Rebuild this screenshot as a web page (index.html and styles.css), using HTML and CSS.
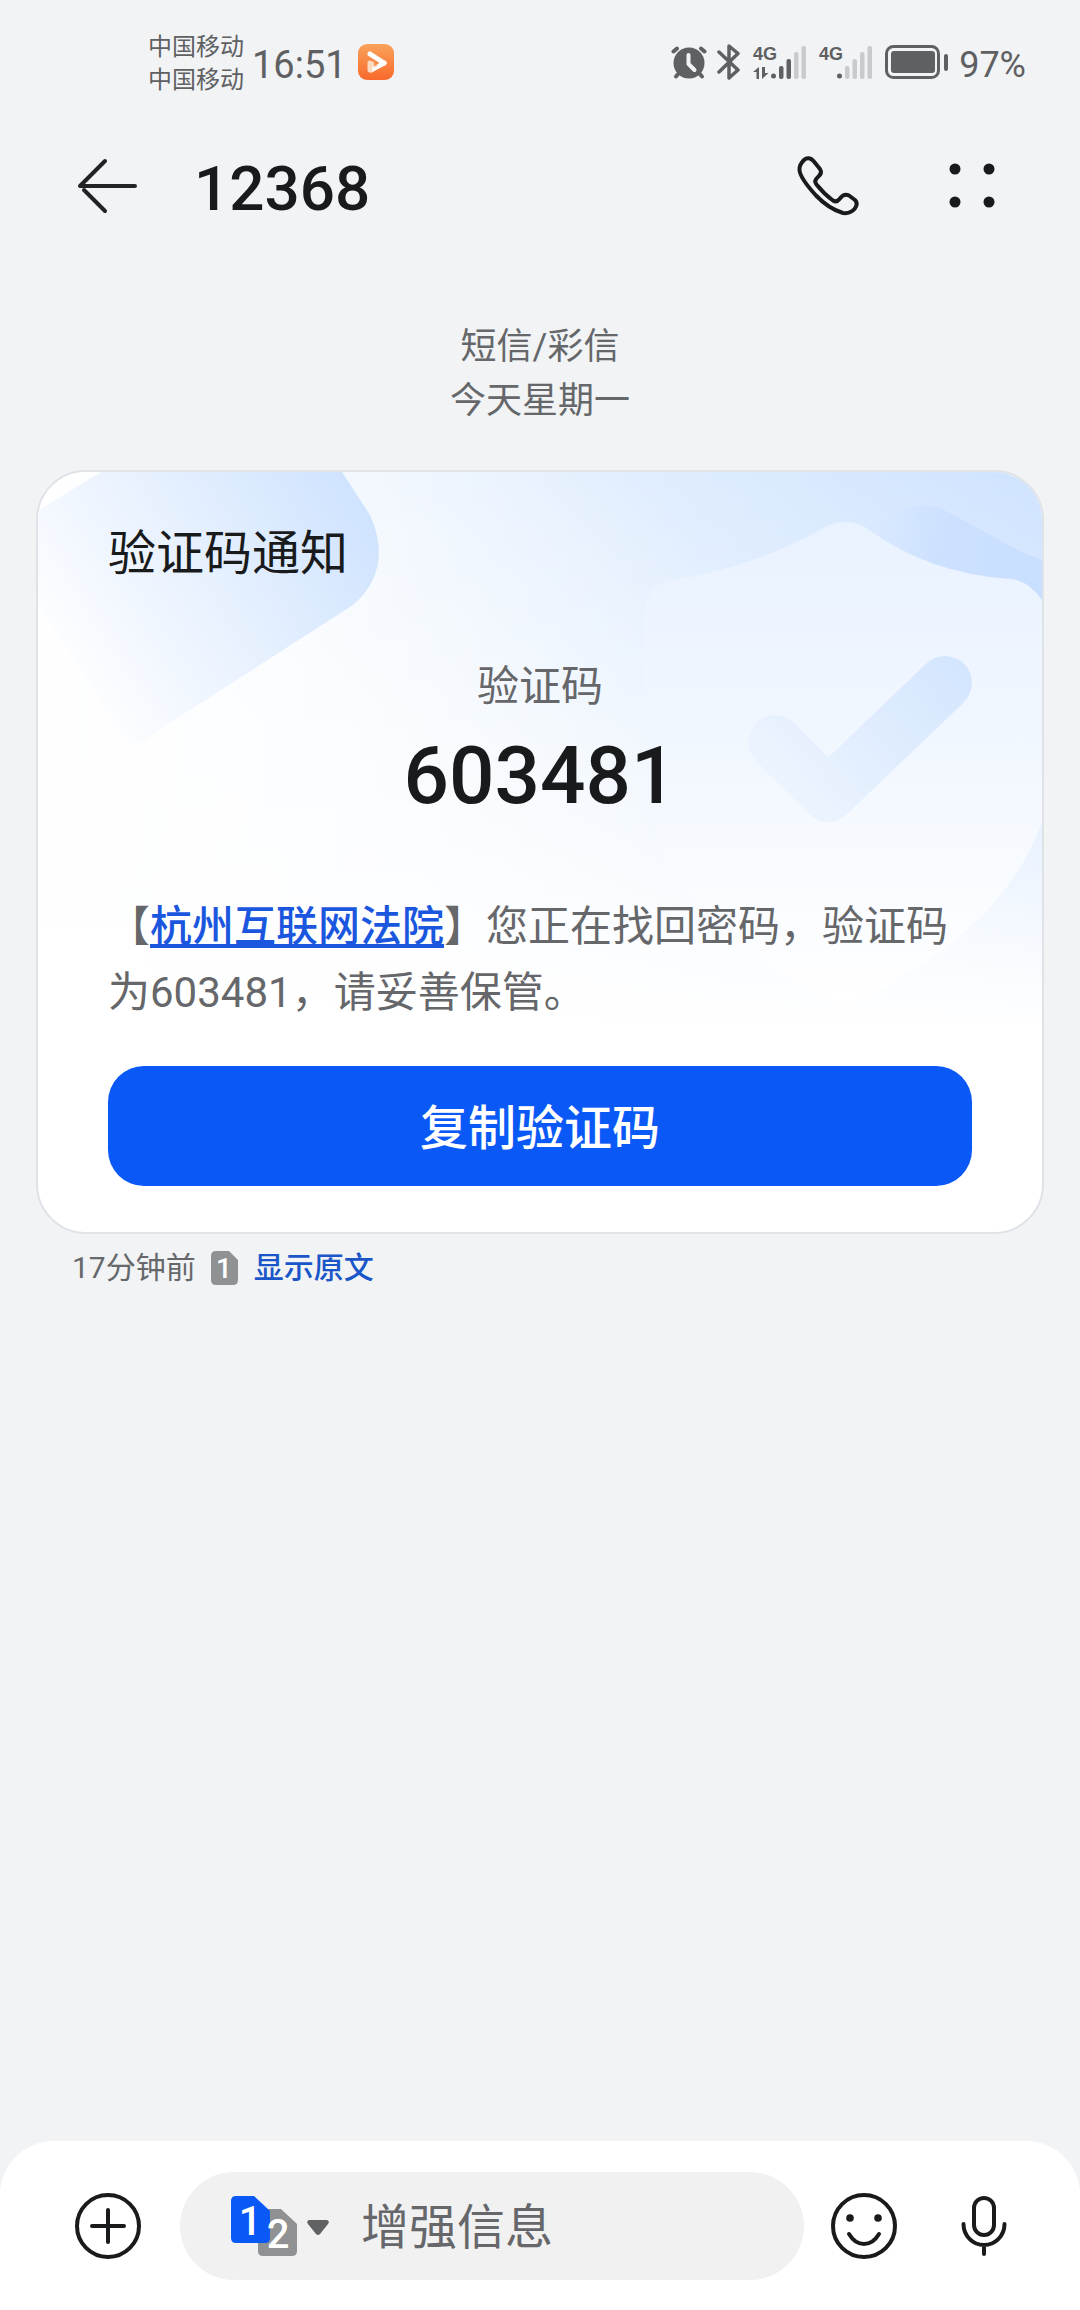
FILE: index.html
```html
<!DOCTYPE html>
<html lang="zh-CN">
<head>
<meta charset="utf-8">
<meta name="viewport" content="width=device-width, initial-scale=1">
<title>12368</title>
<link rel="stylesheet" href="styles.css">
</head>
<body>
<div class="screen">
  <div class="status">
    <div class="status-left">
      <div class="carriers"><span>中国移动</span><span>中国移动</span></div>
      <span class="clock">16:51</span>
      <svg class="app-badge" width="36" height="36" viewBox="0 0 36 36" aria-hidden="true">
        <defs><linearGradient id="badge" x1="0" y1="0" x2="0" y2="1"><stop offset="0" stop-color="#f9a35a"/><stop offset="1" stop-color="#f9692c"/></linearGradient></defs>
        <rect width="36" height="36" rx="9" fill="url(#badge)"/>
        <path d="M12 10l14 9" stroke="#fff" stroke-width="5" stroke-linecap="round" fill="none"/>
        <path d="M26 19l-13 7" stroke="#fff" stroke-width="5" stroke-linecap="round" fill="none"/>
        <path d="M12 26v-7l5 2" stroke="#fdd9bf" stroke-width="5" stroke-linecap="round" stroke-linejoin="round" fill="none"/>
        <path d="M16 17v5l5-2.500z" fill="#f98d4b"/>
      </svg>
    </div>
    <div class="status-right">
      <svg width="36" height="36" viewBox="0 0 36 36" aria-hidden="true">
        <g fill="none" stroke="#5f6062" stroke-linecap="round"><path d="M2.500 7.500l3.500-3M33.500 7.500l-3.500-3" stroke-width="4"/><path d="M8 29l-3 3.500M28 29l3 3.500" stroke-width="4"/></g>
        <circle cx="18" cy="19" r="15.500" fill="#5f6062"/>
        <path d="M17.500 11v9l6 6" fill="none" stroke="#f1f3f5" stroke-width="4" stroke-linecap="round" stroke-linejoin="round"/>
      </svg>
      <svg class="bluetooth" width="24" height="38" viewBox="0 0 24 38" aria-hidden="true">
        <path d="M2 9l19 18-9 8V3l9 7.500L2 29" fill="none" stroke="#5f6062" stroke-width="3.500" stroke-linecap="round" stroke-linejoin="round"/>
      </svg>
      <svg class="signal" width="54" height="36" viewBox="0 0 54 36" aria-hidden="true">
        <text class="net" x="0" y="16">4G</text>
        <g fill="#5f6062"><path d="M0 28l6-5v12H3.500v-7zM9 23h3v6h3.500L9 35z"/><circle cx="20.500" cy="32" r="2.500"/><rect x="26" y="22" width="4.500" height="13" rx="2"/><rect x="33.500" y="15" width="4.500" height="20" rx="2"/></g>
        <g fill="#c9cacc"><rect x="41" y="8" width="4.500" height="27" rx="2"/><rect x="48.500" y="2" width="4.500" height="33" rx="2"/></g>
      </svg>
      <svg class="signal" width="54" height="36" viewBox="0 0 54 36" aria-hidden="true">
        <text class="net" x="0" y="16">4G</text>
        <circle cx="20.500" cy="32" r="2.500" fill="#5f6062"/>
        <g fill="#c9cacc"><rect x="26" y="22" width="4.500" height="13" rx="2"/><rect x="33.500" y="15" width="4.500" height="20" rx="2"/><rect x="41" y="8" width="4.500" height="27" rx="2"/><rect x="48.500" y="2" width="4.500" height="33" rx="2"/></g>
      </svg>
      <svg width="64" height="34" viewBox="0 0 64 34" aria-hidden="true">
        <rect x="1.500" y="1.500" width="52" height="31" rx="7" fill="none" stroke="#5f6062" stroke-width="3"/>
        <rect x="6" y="6" width="44" height="22" rx="3" fill="#5f6062"/>
        <rect x="59" y="9" width="4" height="17" rx="2" fill="#5f6062"/>
      </svg>
      <span class="percent">97%</span>
    </div>
  </div>

  <header class="topbar">
    <button class="icon-btn" type="button" aria-label="返回">
      <svg width="72" height="72" viewBox="0 0 72 72"><g fill="none" stroke="#222325" stroke-width="4" stroke-linecap="round" stroke-linejoin="round"><path d="M63 36H8L33 11M12 40l21 21"/></g></svg>
    </button>
    <h1 class="sender">12368</h1>
    <button class="icon-btn" type="button" aria-label="拨打电话">
      <svg width="72" height="72" viewBox="0 0 72 72"><path d="M12 10C15 7 19 8 21.500 11L28 19C30 22 28.500 25 25.500 27.500C22.500 30 23 32.500 24.500 34.500Q32 44 41 50.500C43.500 52 46 51 47.500 49C50 45.500 53 43.500 57 45.500L63 50C65 52 65.500 55 62.500 59C59 63 55 63.500 51 63Q37 59 24 45.500Q8 28 7.500 20Q7 15 12 10Z" fill="none" stroke="#191a1c" stroke-width="4" stroke-linejoin="round"/></svg>
    </button>
    <button class="icon-btn" type="button" aria-label="更多">
      <svg width="72" height="72" viewBox="0 0 72 72" fill="#191a1c"><circle cx="19" cy="19" r="5.500"/><circle cx="53" cy="19" r="5.500"/><circle cx="19" cy="52" r="5.500"/><circle cx="53" cy="52" r="5.500"/></svg>
    </button>
  </header>

  <main class="thread">
    <div class="day"><span>短信/彩信</span><span>今天星期一</span></div>

    <article class="card">
      <svg class="card-art" viewBox="0 0 1008 560" preserveAspectRatio="xMaxYMin slice" aria-hidden="true">
        <defs>
          <linearGradient id="sky" x1="0" y1="0" x2="1" y2="0"><stop offset="0" stop-color="#fff"/><stop offset=".35" stop-color="#eef5fe"/><stop offset=".65" stop-color="#deecfe"/><stop offset="1" stop-color="#cfe3ff"/></linearGradient>
          <linearGradient id="fade" x1="0" y1="0" x2="0" y2="1"><stop offset="0" stop-color="#fff" stop-opacity="0"/><stop offset=".3" stop-color="#fff" stop-opacity=".25"/><stop offset=".65" stop-color="#fff" stop-opacity=".55"/><stop offset="1" stop-color="#fff"/></linearGradient>
          <linearGradient id="mist" gradientUnits="userSpaceOnUse" x1="400" y1="420" x2="700" y2="100"><stop offset="0" stop-color="#fff" stop-opacity=".6"/><stop offset="1" stop-color="#fff" stop-opacity="0"/></linearGradient>
          <linearGradient id="tile" gradientUnits="userSpaceOnUse" x1="330" y1="30" x2="50" y2="210"><stop offset="0" stop-color="#cfe3ff"/><stop offset=".45" stop-color="#e4effe"/><stop offset="1" stop-color="#fcfdff"/></linearGradient>
          <linearGradient id="back" gradientUnits="userSpaceOnUse" x1="840" y1="60" x2="1007" y2="120"><stop offset="0" stop-color="#c9dfff" stop-opacity="0"/><stop offset=".4" stop-color="#c9dfff" stop-opacity=".8"/><stop offset="1" stop-color="#c9dfff"/></linearGradient>
          <linearGradient id="shield" gradientUnits="userSpaceOnUse" x1="0" y1="52" x2="0" y2="530"><stop offset="0" stop-color="#e9f2ff"/><stop offset=".45" stop-color="#f1f7ff"/><stop offset="1" stop-color="#fff"/></linearGradient>
          <linearGradient id="tick" gradientUnits="userSpaceOnUse" x1="925" y1="200" x2="775" y2="330"><stop offset="0" stop-color="#d4e6fe"/><stop offset="1" stop-color="#ebf3fe"/></linearGradient>
        </defs>
        <rect width="1008" height="560" fill="url(#sky)"/>
        <rect width="1008" height="560" fill="url(#mist)"/>
        <rect width="1008" height="560" fill="url(#fade)"/>
        <path d="M0 41L67 0H308L336 43Q360 97 319 133L105 271Q98 275 94 270L0 128Z" fill="url(#tile)"/>
        <path d="M844 50L871 37Q893 28 914 40L964 67Q985 80 1008 88V140H844Z" fill="url(#back)"/>
        <path d="M791 55Q811 45 831 55Q894 102 977 107Q996 109 1010 131V345Q972 460 811 535Q640 460 610 320V150Q610 115 634 109Q720 96 791 55Z" fill="url(#shield)"/>
        <path d="M741 270L794 323L911 211" fill="none" stroke="url(#tick)" stroke-width="54" stroke-linecap="round" stroke-linejoin="round"/>
      </svg>
      <div class="card-body">
        <h2 class="card-title">验证码通知</h2>
        <p class="code-label">验证码</p>
        <p class="code">603481</p>
        <p class="message">【<a href="#court">杭州互联网法院</a>】您正在找回密码，验证码为603481，请妥善保管。</p>
        <button class="copy" type="button">复制验证码</button>
      </div>
    </article>

    <div class="meta">
      <span>17分钟前</span>
      <svg width="28" height="36" viewBox="0 0 28 36" aria-hidden="true"><path d="M5 1H18L27 10V30Q27 35 22 35H5Q0 35 0 30V6Q0 1 5 1Z" fill="#909193"/><text class="sim-small" x="13" y="28">1</text></svg>
      <a href="#original">显示原文</a>
    </div>
  </main>

  <form class="composer">
    <button class="tool" type="button" aria-label="添加">
      <svg width="66" height="66" viewBox="0 0 66 66" fill="none" stroke="#191a1c" stroke-width="4" stroke-linecap="round"><circle cx="33" cy="33" r="31"/><path d="M33 17V49M17 33H49"/></svg>
    </button>
    <div class="field">
      <button class="sim" type="button" aria-label="选择SIM卡">
        <svg width="100" height="62" viewBox="0 0 100 62">
          <path d="M32 14H50L66 29V56Q66 61 61 61H32Q27 61 27 56V19Q27 14 32 14Z" fill="#909193"/>
          <path d="M5 1H23L39 16V43Q39 48 34 48H5Q0 48 0 43V6Q0 1 5 1Z" fill="#0a59f7"/>
          <text class="sim-num" x="19" y="40">1</text><text class="sim-num" x="47" y="53">2</text>
          <path d="M78 25H96Q99 26 97 29L89 39Q87 41 85 39L77 29Q75 26 78 25Z" fill="#606163"/>
        </svg>
      </button>
      <input class="entry" type="text" placeholder="增强信息" aria-label="增强信息">
    </div>
    <button class="tool" type="button" aria-label="表情">
      <svg width="66" height="66" viewBox="0 0 66 66" fill="none" stroke="#191a1c" stroke-width="4" stroke-linecap="round"><circle cx="33" cy="33" r="31"/><path d="M18 41Q24 51 33 51T48 41"/><g fill="#191a1c" stroke="none"><circle cx="19" cy="25" r="3.800"/><circle cx="47" cy="25" r="3.800"/></g></svg>
    </button>
    <button class="tool mic" type="button" aria-label="语音">
      <svg width="66" height="66" viewBox="0 0 66 66" fill="none" stroke="#191a1c" stroke-width="4" stroke-linecap="round"><rect x="23" y="5" width="20" height="37" rx="10"/><path d="M12.500 31A20.500 21 0 0 0 53.500 31M33 53V61"/></svg>
    </button>
  </form>
</div>
</body>
</html>
```
FILE: styles.css
```css
* {
  box-sizing: border-box;
}

body {
  margin: 0;
  background: #f1f3f5;
  color: #191a1c;
  font-family: Roboto, "Noto Sans CJK SC", sans-serif;
}

h1,
h2,
p {
  margin: 0;
}

button {
  padding: 0;
  border: 0;
  background: none;
  font: inherit;
}

svg {
  display: block;
  flex: none;
}

.screen {
  display: flex;
  flex-direction: column;
  min-height: 100vh;
}

/* Status bar */
.status {
  display: flex;
  justify-content: space-between;
  align-items: center;
  height: 124px;
  padding: 0 54px 0 148px;
  color: #5f6062;
}

.status-left,
.status-right {
  display: flex;
  align-items: center;
}

.carriers {
  display: flex;
  flex-direction: column;
  padding-top: 3px;
  font-size: 24px;
  line-height: 33px;
}

.clock {
  margin-left: 8px;
  padding-top: 5px;
  font-size: 38px;
  line-height: 48px;
}

.app-badge {
  margin-left: 11px;
}

.bluetooth {
  margin: 0 12px 0 10px;
}

.signal {
  margin-right: 12px;
}

.net {
  fill: #5f6062;
  font-family: "Liberation Sans Narrow", "Liberation Sans", sans-serif;
  font-size: 18px;
  font-weight: 700;
}

.percent {
  margin-left: 10px;
  padding-top: 5px;
  font-size: 36px;
  line-height: 48px;
}

/* Conversation header */
.topbar {
  display: flex;
  align-items: center;
  gap: 72px;
  height: 124px;
  padding: 0 72px;
}

.icon-btn {
  width: 72px;
  height: 72px;
}

.sender {
  flex: 1;
  margin-left: -22px;
  padding-top: 6px;
  font-size: 62px;
  font-weight: 500;
  line-height: 72px;
}

/* Message thread */
.thread {
  flex: 1;
  padding: 72px 36px 48px;
}

.day {
  display: flex;
  flex-direction: column;
  align-items: center;
  margin-bottom: 42px;
  color: #66676a;
  font-size: 36px;
  line-height: 54px;
}

.card {
  position: relative;
  overflow: hidden;
  border: 2px solid #dfe2e6;
  border-radius: 50px;
  background: #fff;
}

.card-art {
  position: absolute;
  top: 0;
  left: 0;
  width: 100%;
  height: 560px;
}

.card-body {
  position: relative;
  padding: 46px 70px;
}

.card-title {
  font-size: 48px;
  font-weight: 400;
  line-height: 72px;
}

.code-label {
  margin-top: 64px;
  color: #66676a;
  font-size: 42px;
  line-height: 66px;
  text-align: center;
}

.code {
  margin-top: 8px;
  font-size: 80px;
  font-weight: 500;
  line-height: 96px;
  text-align: center;
}

.message {
  margin-top: 70px;
  color: #66676a;
  font-size: 42px;
  line-height: 66px;
}

.message a {
  color: #1a56de;
  font-weight: 500;
  text-decoration: underline;
}

.copy {
  display: block;
  width: 100%;
  height: 120px;
  margin-top: 40px;
  padding-bottom: 4px;
  border-radius: 36px;
  background: #0a59f7;
  color: #fff;
  font-size: 48px;
  font-weight: 500;
}

.meta {
  display: flex;
  align-items: center;
  gap: 15px;
  padding: 11px 36px;
  color: #66676a;
  font-size: 30px;
  line-height: 45px;
}

.meta a {
  color: #1a56c8;
  font-weight: 500;
  text-decoration: none;
}

.sim-small {
  fill: #fff;
  font-size: 28px;
  font-weight: 500;
  text-anchor: middle;
}

/* Composer */
.composer {
  display: flex;
  align-items: center;
  padding: 31px 63px 30px 75px;
  border-radius: 54px 54px 0 0;
  background: #fff;
}

.tool {
  flex: none;
  width: 66px;
  height: 66px;
}

.mic {
  margin-left: 54px;
}

.field {
  display: flex;
  flex: 1;
  align-items: center;
  gap: 30px;
  min-width: 0;
  height: 108px;
  margin: 0 27px 0 39px;
  padding: 0 51px;
  border-radius: 54px;
  background: #f1f1f1;
}

.entry {
  flex: 1;
  min-width: 0;
  padding: 4px 0 0;
  border: 0;
  outline: 0;
  background: none;
  font: inherit;
  font-size: 48px;
  line-height: 72px;
}

.entry::placeholder {
  color: #66676a;
}

.sim-num {
  fill: #fff;
  font-size: 40px;
  font-weight: 500;
  text-anchor: middle;
}
```
